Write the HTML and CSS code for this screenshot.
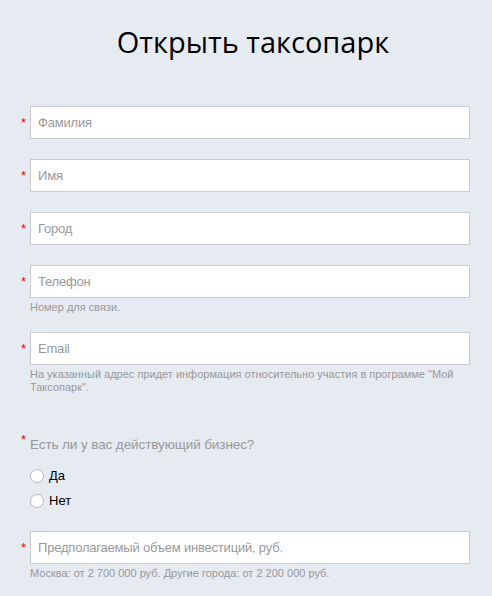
FILE: index.html
```html
<!DOCTYPE html>
<html>
<head>
    <title>Открыть таксопарк</title>
    <link rel="stylesheet" href="styles.css">
</head>
<body>
    <h1 class="page-title">Открыть таксопарк</h1>

    <form class="park-form" id="parkForm" onsubmit="return false;">
        <div class="field">
            <span class="required">*</span>
            <input type="text" name="lastName" placeholder="Фамилия">
        </div>
        <div class="field">
            <span class="required">*</span>
            <input type="text" name="firstName" placeholder="Имя">
        </div>
        <div class="field">
            <span class="required">*</span>
            <input type="text" name="city" placeholder="Город">
        </div>
        <div class="field">
            <span class="required">*</span>
            <input type="text" name="phone" placeholder="Телефон">
            <p class="hint">Номер для связи.</p>
        </div>
        <div class="field">
            <span class="required">*</span>
            <input type="text" name="email" placeholder="Email">
            <p class="hint">На указанный адрес придет информация относительно участия в программе "Мой Таксопарк".</p>
        </div>

        <div class="field question">
            <span class="required">*</span>
            <div>
                <p class="question-text">Есть ли у вас действующий бизнес?</p>
                <label class="radio"><input type="radio" name="business" value="yes"> Да</label>
                <label class="radio"><input type="radio" name="business" value="no"> Нет</label>
            </div>
        </div>

        <div class="field">
            <span class="required">*</span>
            <input type="text" name="investment" placeholder="Предполагаемый объем инвестиций, руб.">
            <p class="hint">Москва: от 2 700 000 руб. Другие города: от 2 200 000 руб.</p>
        </div>
    </form>
</body>
</html>
```

FILE: styles.css
```css
body {
    margin: 0;
    background-color: #e6eaf1;
    font-family: "Liberation Sans", Arial, sans-serif;
}

.page-title {
    margin: 0;
    padding: 22px 0 0 14px;
    font-family: "Open Sans", sans-serif;
    font-size: 29px;
    font-weight: normal;
    line-height: 40px;
    text-align: center;
    color: #000;
}

.park-form {
    padding: 44px 22px 0 0;
}

.field {
    display: grid;
    grid-template-columns: 30px 1fr;
    align-items: center;
    margin-bottom: 20px;
}

.required {
    grid-column: 1;
    grid-row: 1;
    padding-right: 4px;
    text-align: right;
    color: #f00;
    font-size: 13px;
    line-height: 14px;
}

.field input[type="text"] {
    grid-column: 2;
    width: 100%;
    height: 33px;
    padding: 0 7px;
    border: 1px solid #ccc;
    background: #fff;
    font-family: inherit;
    font-size: 13px;
    letter-spacing: -0.2px;
    color: #333;
    box-sizing: border-box;
    outline: none;
}

.field input::placeholder {
    color: #999;
}

.hint {
    grid-column: 2;
    margin: 3px 0 -2px;
    font-size: 11px;
    line-height: 13px;
    color: #999;
}

/* Radio question */
.question {
    align-items: start;
    margin-top: 40px;
    margin-bottom: 18px;
}

.question .required {
    padding-top: 1px;
}

.question-text {
    margin: 4px 0 9px;
    font-size: 13.5px;
    letter-spacing: -0.1px;
    line-height: 18px;
    color: #999;
}

.radio {
    display: flex;
    align-items: center;
    gap: 5px;
    height: 25px;
    font-size: 13px;
    color: #000;
}

.radio input {
    appearance: none;
    -webkit-appearance: none;
    width: 14px;
    height: 14px;
    margin: 0;
    border: 1px solid #bbb;
    border-radius: 50%;
    background: #fff;
    box-sizing: border-box;
}
```
